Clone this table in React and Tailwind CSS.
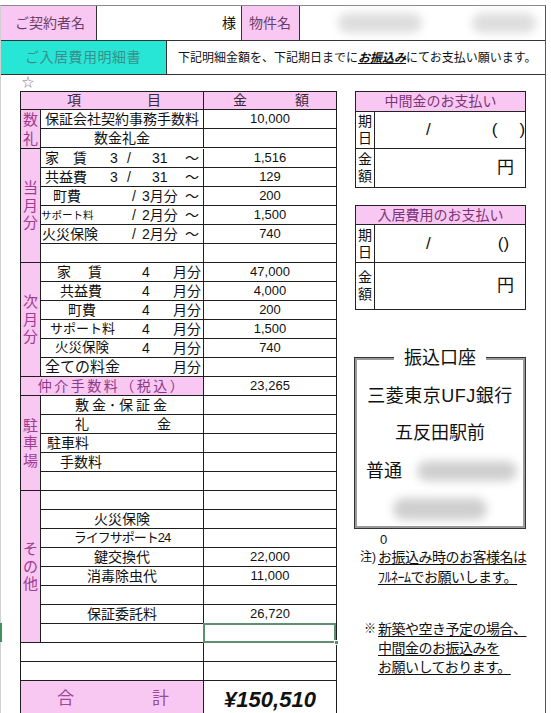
import React from "react";

function Row({ children, amount, center = false, selected = false, cls = "" }) {
  return (
    <div className="flex h-[19px] border-b border-[#1e1e1e]">
      <div
        className={`flex w-[163px] shrink-0 items-center overflow-hidden whitespace-nowrap border-r border-[#1e1e1e] text-[14px] leading-[18px] ${
          center ? "justify-center" : ""
        } ${cls}`}
      >
        {children}
      </div>
      <div className="relative flex flex-1 items-center justify-center text-[13px] leading-[18px]">
        {amount}
        {selected && (
          <>
            <div className="absolute -left-[1px] -top-[1px] right-0 -bottom-[1px] border-2 border-[#5e8f6e]" />
            <div className="absolute -right-[3px] -bottom-[3px] h-[5px] w-[5px] border border-white bg-[#5e8f6e]" />
          </>
        )}
      </div>
    </div>
  );
}

function Cat({ chars, children, cls = "leading-[17.5px]" }) {
  return (
    <div className="flex">
      <div
        className={`flex w-[20px] shrink-0 flex-col items-center justify-center border-b border-r border-[#1e1e1e] bg-[#f8c8f2] text-[15px] text-[#a13d91] ${cls}`}
      >
        {chars.map((c) => (
          <span key={c}>{c}</span>
        ))}
      </div>
      <div className="min-w-0 flex-1">{children}</div>
    </div>
  );
}

function Blur({ cls }) {
  return <div className={`shrink-0 rounded-full bg-[#cfcfcf] blur-[5px] ${cls}`} />;
}

export default function App() {
  return (
    <div className="relative h-[713px] w-[551px] overflow-hidden bg-white pt-[5px] font-['Liberation_Sans','Noto_Sans_CJK_JP',sans-serif] text-[#111]">
      <div className="absolute left-0 top-[623px] h-[19px] w-[2px] bg-[#3f8f5f]" />
      <div className="h-[708px] w-[546px] border-l border-r border-t border-l-[#d0d0d0] border-r-[#555] border-t-[#8a8a8a]">
        {/* Row 1 */}
        <div className="flex h-[35px] border-b border-[#333]">
          <div className="flex w-[96px] shrink-0 items-center border-r border-[#333] bg-[#f8c8f2] pl-[14px] text-[14px] text-[#6b3f6b]">
            ご契約者名
          </div>
          <div className="flex w-[145px] shrink-0 items-center justify-end border-r border-[#333] pr-[5px] text-[14px]">
            様
          </div>
          <div className="flex w-[58px] shrink-0 items-center border-r border-[#333] bg-[#f8c8f2] pl-[7px] text-[14px] text-[#6b3f6b]">
            物件名
          </div>
          <div className="flex flex-1 items-center">
            <Blur cls="ml-[38px] h-[20px] w-[84px] opacity-70" />
            <Blur cls="ml-[50px] h-[20px] w-[64px] opacity-70" />
          </div>
        </div>
        {/* Row 2 */}
        <div className="flex h-[34px] border-b border-[#333]">
          <div className="flex w-[166px] shrink-0 items-center border-r border-[#333] bg-[#28e6d5] pl-[24px] text-[14px] tracking-[0.5px] text-[#3b8f8c]">
            ご入居費用明細書
          </div>
          <div className="flex flex-1 items-center whitespace-nowrap pl-[11px] text-[12px]">
            下記明細金額を、下記期日までに
            <span className="font-bold italic underline">お振込み</span>
            にてお支払い願います。
          </div>
        </div>

        {/* Body */}
        <div className="flex">
          {/* Left: main table */}
          <div className="w-[336px] shrink-0 pl-[19px]">
            <div className="h-[16px] pl-[2px] text-[12px] leading-[16px] text-[#8a6a8a]">☆</div>
            <div className="w-[317px] border border-[#1e1e1e]">
              {/* header */}
              <div className="flex h-[18px] border-b border-[#1e1e1e] bg-[#f8c8f2] text-[14px] leading-[17px] text-[#3a2a3a]">
                <div className="flex w-[183px] shrink-0 items-center border-r border-[#1e1e1e]">
                  <span className="ml-[46px]">項</span>
                  <span className="ml-[66px]">目</span>
                </div>
                <div className="flex flex-1 items-center">
                  <span className="ml-[29px]">金</span>
                  <span className="ml-[48px]">額</span>
                </div>
              </div>

              <Cat chars={["数", "礼"]} cls="leading-[19px]">
                <Row amount="10,000" cls="pl-[4px]">保証会社契約事務手数料</Row>
                <Row center>数金礼金</Row>
              </Cat>

              <Cat chars={["当", "月", "分"]}>
                <Row amount="1,516">
                  <span className="w-[69px] shrink-0 pl-[4px]">家　賃</span>
                  <span className="w-[17px] shrink-0">3</span>
                  <span className="w-[25px] shrink-0">/</span>
                  <span className="w-[33px] shrink-0">31</span>
                  <span>～</span>
                </Row>
                <Row amount="129">
                  <span className="w-[69px] shrink-0 pl-[4px]">共益費</span>
                  <span className="w-[17px] shrink-0">3</span>
                  <span className="w-[25px] shrink-0">/</span>
                  <span className="w-[33px] shrink-0">31</span>
                  <span>～</span>
                </Row>
                <Row amount="200">
                  <span className="w-[91px] shrink-0 pl-[12px]">町費</span>
                  <span className="w-[10px] shrink-0">/</span>
                  <span className="w-[43px] shrink-0">3月分</span>
                  <span>～</span>
                </Row>
                <Row amount="1,500">
                  <span className="w-[91px] shrink-0 text-[10.5px]">サポート料</span>
                  <span className="w-[10px] shrink-0">/</span>
                  <span className="w-[43px] shrink-0">2月分</span>
                  <span>～</span>
                </Row>
                <Row amount="740">
                  <span className="w-[91px] shrink-0 pl-[1px]">火災保険</span>
                  <span className="w-[10px] shrink-0">/</span>
                  <span className="w-[43px] shrink-0">2月分</span>
                  <span>～</span>
                </Row>
                <Row />
              </Cat>

              <Cat chars={["次", "月", "分"]}>
                <Row amount="47,000">
                  <span className="w-[101px] shrink-0 pl-[16px]">
                    家<span className="ml-[17px]">賃</span>
                  </span>
                  <span className="w-[31px] shrink-0">4</span>
                  <span>月分</span>
                </Row>
                <Row amount="4,000">
                  <span className="w-[101px] shrink-0 pl-[19px]">共益費</span>
                  <span className="w-[31px] shrink-0">4</span>
                  <span>月分</span>
                </Row>
                <Row amount="200">
                  <span className="w-[101px] shrink-0 pl-[27px]">町費</span>
                  <span className="w-[31px] shrink-0">4</span>
                  <span>月分</span>
                </Row>
                <Row amount="1,500">
                  <span className="w-[101px] shrink-0 pl-[9px] text-[13px]">サポート料</span>
                  <span className="w-[31px] shrink-0">4</span>
                  <span>月分</span>
                </Row>
                <Row amount="740">
                  <span className="w-[101px] shrink-0 pl-[14px] text-[13.5px]">火災保険</span>
                  <span className="w-[31px] shrink-0">4</span>
                  <span>月分</span>
                </Row>
                <Row>
                  <span className="w-[132px] shrink-0 pl-[4px] text-[15px]">全ての料金</span>
                  <span>月分</span>
                </Row>
              </Cat>

              {/* 仲介手数料 */}
              <div className="flex h-[19px] border-b border-[#1e1e1e]">
                <div className="flex w-[183px] shrink-0 items-center justify-center border-r border-[#1e1e1e] bg-[#f8c8f2] text-[14px] leading-[18px] tracking-[2.5px] text-[#8c3a88]">
                  仲介手数料（税込）
                </div>
                <div className="flex flex-1 items-center justify-center text-[13px]">23,265</div>
              </div>

              <Cat chars={["駐", "車", "場"]}>
                <Row>
                  <span className="pl-[34px] tracking-[3px]">敷金･保証金</span>
                </Row>
                <Row>
                  <span className="pl-[34px]">
                    礼<span className="ml-[68px]">金</span>
                  </span>
                </Row>
                <Row cls="pl-[6px]">駐車料</Row>
                <Row cls="pl-[19px]">手数料</Row>
                <Row />
              </Cat>

              <Cat chars={["そ", "の", "他"]}>
                <Row />
                <Row center>火災保険</Row>
                <Row center>
                  <span className="text-[13px] tracking-[-1px]">ライフサポート24</span>
                </Row>
                <Row center amount="22,000">鍵交換代</Row>
                <Row center amount="11,000">消毒除虫代</Row>
                <Row />
                <Row center amount="26,720">保証委託料</Row>
                <Row selected />
              </Cat>

              <div className="flex h-[19px] border-b border-[#1e1e1e]">
                <div className="w-[183px] shrink-0 border-r border-[#1e1e1e]" />
                <div className="flex-1" />
              </div>
              <div className="flex h-[19px] border-b border-[#1e1e1e]">
                <div className="w-[183px] shrink-0 border-r border-[#1e1e1e]" />
                <div className="flex-1" />
              </div>

              {/* 合計 */}
              <div className="flex h-[37px] border-b border-[#1e1e1e]">
                <div className="flex w-[183px] shrink-0 items-center border-r border-[#1e1e1e] bg-[#f8c8f2] text-[17px] text-[#9b4a96]">
                  <span className="ml-[36px]">合</span>
                  <span className="ml-[78px]">計</span>
                </div>
                <div className="flex flex-1 items-center justify-center text-[22px] font-bold italic">
                  ¥150,510
                </div>
              </div>
            </div>
          </div>

          {/* Right column */}
          <div className="ml-[18px] w-[171px] shrink-0">
            {/* Box 1 */}
            <div className="mt-[16px] border border-[#222]">
              <div className="flex h-[20px] items-center justify-center border-b border-[#222] bg-[#f8c8f2] text-[14px] text-[#7b3579]">
                中間金のお支払い
              </div>
              <div className="flex h-[37px] border-b border-[#222]">
                <div className="flex w-[19px] shrink-0 flex-col items-center justify-center border-r border-[#222] text-[14px] leading-[17px]">
                  <span>期</span>
                  <span>日</span>
                </div>
                <div className="flex flex-1 items-center text-[17px]">
                  <span className="ml-[51px]">/</span>
                  <span className="ml-[61px]">(</span>
                  <span className="ml-[22px]">)</span>
                </div>
              </div>
              <div className="flex h-[38px]">
                <div className="flex w-[19px] shrink-0 flex-col items-center justify-center border-r border-[#222] text-[14px] leading-[17px]">
                  <span>金</span>
                  <span>額</span>
                </div>
                <div className="flex flex-1 items-center justify-end pr-[11px] text-[17px]">円</div>
              </div>
            </div>

            {/* Box 2 */}
            <div className="mt-[17px] border border-[#222]">
              <div className="flex h-[19px] items-center justify-center border-b border-[#222] bg-[#f8c8f2] text-[14px] text-[#7b3579]">
                入居費用のお支払い
              </div>
              <div className="flex h-[38px] border-b border-[#222]">
                <div className="flex w-[19px] shrink-0 flex-col items-center justify-center border-r border-[#222] text-[14px] leading-[17px]">
                  <span>期</span>
                  <span>日</span>
                </div>
                <div className="flex flex-1 items-center text-[17px]">
                  <span className="ml-[51px]">/</span>
                  <span className="ml-[67px]">()</span>
                </div>
              </div>
              <div className="flex h-[46px]">
                <div className="flex w-[19px] shrink-0 flex-col items-center justify-center border-r border-[#222] text-[14px] leading-[17px]">
                  <span>金</span>
                  <span>額</span>
                </div>
                <div className="flex flex-1 items-center justify-end pr-[11px] text-[17px]">円</div>
              </div>
            </div>

            {/* Box 3 */}
            <div className="relative -ml-[1px] mt-[47px] h-[172px] w-[172px] border border-[#333]">
              <div className="h-full w-full border-2 border-[#9a9a9a]">
                <div className="whitespace-nowrap pt-[26px] text-center text-[18px] leading-[20px] tracking-[0.5px]">
                  三菱東京UFJ銀行
                </div>
                <div className="mt-[17px] whitespace-nowrap text-center text-[18px] leading-[20px]">五反田駅前</div>
                <div className="mt-[17px] flex h-[22px] items-center">
                  <span className="whitespace-nowrap pl-[9px] text-[18px]">普通</span>
                  <Blur cls="ml-[15px] h-[20px] w-[100px]" />
                </div>
                <div className="mt-[16px] flex">
                  <Blur cls="ml-[36px] h-[22px] w-[94px]" />
                </div>
              </div>
              <div className="absolute -top-[11px] left-1/2 -translate-x-1/2 whitespace-nowrap bg-white px-[10px] text-[18px] leading-[22px]">
                振込口座
              </div>
            </div>

            <div className="mt-[4px] h-[14px] pl-[25px] text-[13px] leading-[14px]">0</div>
            <div className="flex whitespace-nowrap text-[14px] leading-[20px] tracking-[-0.5px]">
              <span className="w-[23px] shrink-0 pl-[5px] text-[12px] tracking-normal">注)</span>
              <div className="underline underline-offset-2">
                <div>お振込み時のお客様名は</div>
                <div>ﾌﾙﾈｰﾑでお願いします。</div>
              </div>
            </div>
            <div className="mt-[33px] flex whitespace-nowrap text-[14px] leading-[19px] tracking-[-0.5px]">
              <span className="w-[23px] shrink-0 pl-[9px] text-[12px]">※</span>
              <div className="underline underline-offset-2">
                <div>新築や空き予定の場合、</div>
                <div>中間金のお振込みを</div>
                <div>お願いしております。</div>
              </div>
            </div>
          </div>
        </div>
      </div>
    </div>
  );
}
